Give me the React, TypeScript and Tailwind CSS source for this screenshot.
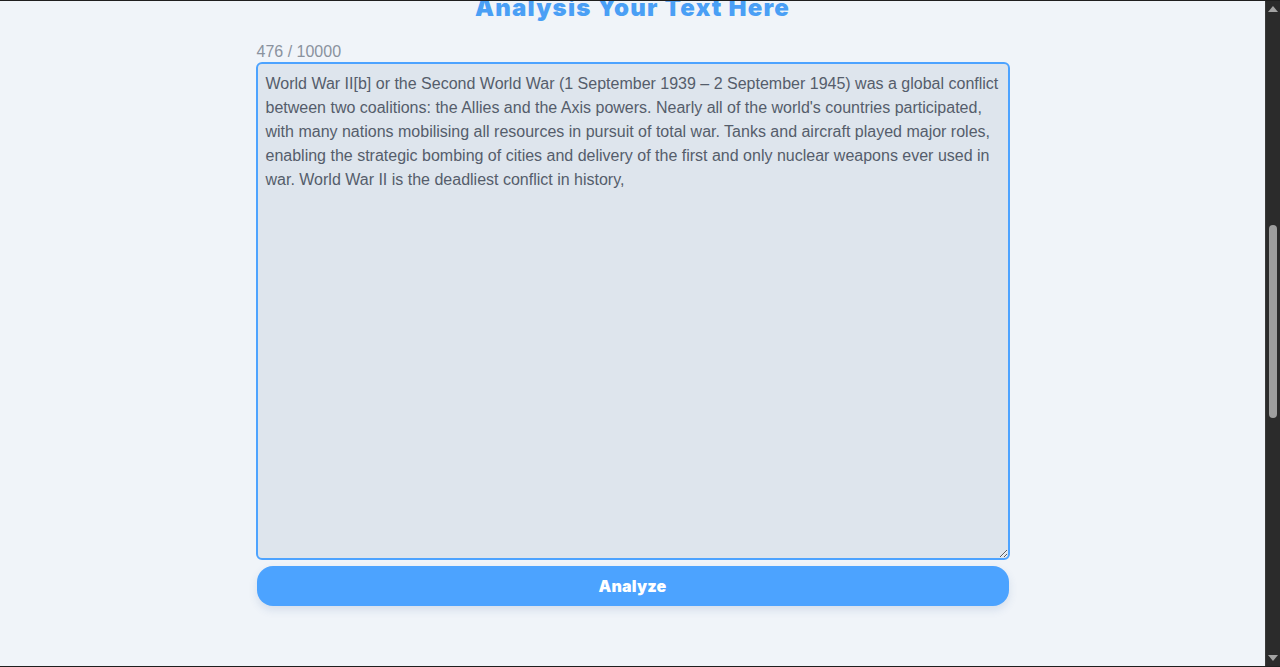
import { useState } from 'react';

const SAMPLE =
	"World War II[b] or the Second World War (1 September 1939 – 2 September 1945) was a global conflict between two coalitions: the Allies and the Axis powers. Nearly all of the world's countries participated, with many nations mobilising all resources in pursuit of total war. Tanks and aircraft played major roles, enabling the strategic bombing of cities and delivery of the first and only nuclear weapons ever used in war. World War II is the deadliest conflict in history,   ";

const MAX_CHARS = 10000;

function FakeScrollbar() {
	return (
		<div className="flex w-[15px] shrink-0 flex-col items-center border-l border-[#3a3a3a] bg-[#2b2b2b]">
			<div className="mt-[5px] h-0 w-0 border-x-[5px] border-b-[6px] border-x-transparent border-b-[#a3a3a3]" />
			<div className="mt-[213px] h-[193px] w-[8px] rounded-full bg-[#9e9e9e]" />
			<div className="flex-1" />
			<div className="mb-[5px] h-0 w-0 border-x-[5px] border-t-[6px] border-x-transparent border-t-[#a3a3a3]" />
		</div>
	);
}

export default function App() {
	const [text, setText] = useState(SAMPLE);

	return (
		<div className="flex h-[667px] overflow-hidden border-y border-[#1f1f1f] bg-[#f0f4f9] font-['Liberation_Sans',Arial,sans-serif]">
			<main className="flex flex-1 flex-col items-center">
				<h1 className="-mt-[9px] font-['Inter',sans-serif] text-2xl leading-8 font-black tracking-[1.2px] text-[#4a9ff5]">
					Analysis Your Text Here
				</h1>

				<div className="mt-[18px] flex w-[754px] flex-col">
					<div className="pl-px text-base leading-5 text-[#8a929e]">
						{text.length} / {MAX_CHARS}
					</div>
					<textarea
						value={text}
						onChange={(e) => setText(e.target.value.slice(0, MAX_CHARS))}
						className="block h-[498px] w-full rounded-md border-2 border-[#4da3ff] bg-[#dee5ed] p-2 text-base leading-6 text-[#555d6b] outline-none"
					/>
					<button className="mx-[1px] mt-[6px] h-10 rounded-2xl bg-[#4ca3ff] font-['Inter',sans-serif] text-base font-black tracking-[0.2px] text-white shadow-[0_4px_8px_rgba(60,100,160,0.15)]">
						Analyze
					</button>
				</div>
			</main>
			<FakeScrollbar />
		</div>
	);
}
